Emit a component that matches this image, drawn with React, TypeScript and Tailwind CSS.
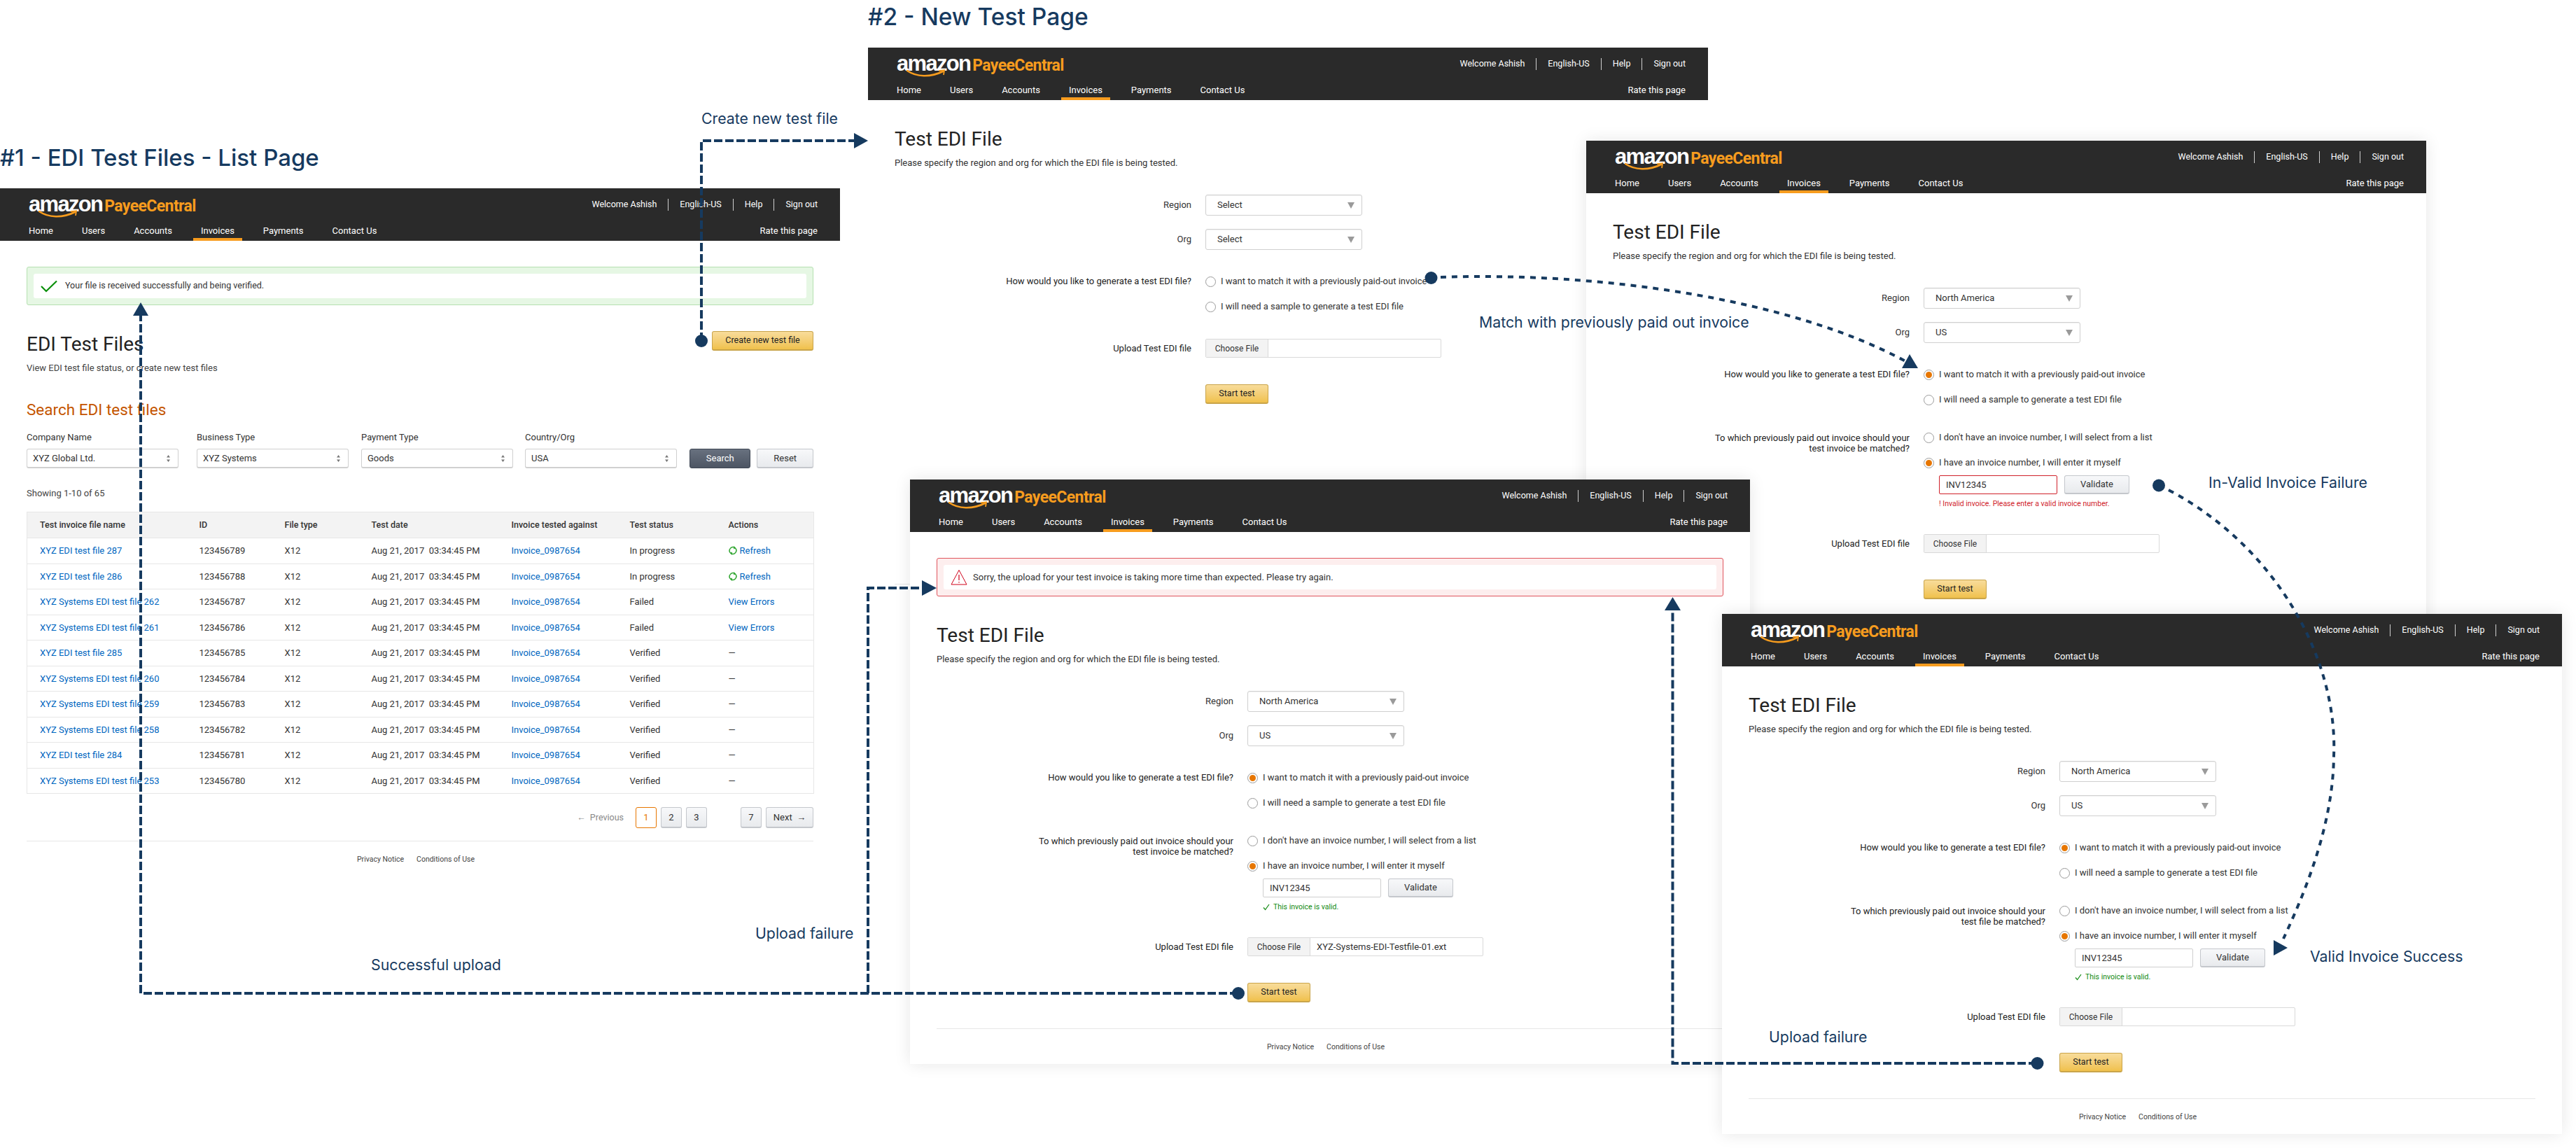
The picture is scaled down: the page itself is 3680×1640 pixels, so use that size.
import React from 'react';

const FONT = "font-['Roboto',sans-serif]";

function Logo() {
  return (
    <div className="relative flex items-baseline h-[34px]">
      <span className="font-['Liberation_Sans',sans-serif] font-bold text-[31px] leading-[34px] tracking-[-1.7px] text-white">amazon</span>
      <span className="ml-[3px] font-['Roboto',sans-serif] font-bold text-[23px] leading-[34px] tracking-[-0.6px] text-[#f79c1e]">PayeeCentral</span>
      <svg className="absolute left-[14px] top-[25px]" width="56" height="14" viewBox="0 0 56 14" fill="none">
        <path d="M1 2 C 14 11, 34 12, 52 3" stroke="#f79c1e" strokeWidth="2.6" strokeLinecap="round" />
        <path d="M46 2.2 L 54 1.2 L 53 8" stroke="#f79c1e" strokeWidth="1.8" fill="none" />
      </svg>
    </div>
  );
}

function Header() {
  return (
    <header className="h-[75px] bg-[#2a2a2a] pl-[41px] pr-[32px] flex flex-col text-white text-[13px]">
      <div className="h-[46px] flex items-center justify-between">
        <Logo />
        <div className="flex items-center text-[12.5px]">
          <span>Welcome Ashish</span>
          <span className="h-[17px] w-px bg-[#cfcfcf] mx-[16px]" />
          <span>English-US</span>
          <span className="h-[17px] w-px bg-[#cfcfcf] mx-[16px]" />
          <span>Help</span>
          <span className="h-[17px] w-px bg-[#cfcfcf] mx-[16px]" />
          <span>Sign out</span>
        </div>
      </div>
      <div className="h-[29px] flex justify-between">
        <nav className="flex gap-[19px] -ml-[11px]">
          {['Home', 'Users', 'Accounts', 'Invoices', 'Payments', 'Contact Us'].map((n) => (
            <a key={n} className={n === 'Invoices' ? 'h-full px-[11px] pt-[5px] border-b-4 border-[#f79c1e]' : 'h-full px-[11px] pt-[5px]'}>{n}</a>
          ))}
        </nav>
        <span className="pt-[5px]">Rate this page</span>
      </div>
    </header>
  );
}

function GoldButton({ children, className }: { children: React.ReactNode; className: string }) {
  return (
    <button className={`${className} rounded-[3px] border border-[#c9a44a] border-b-2 bg-gradient-to-b from-[#f8dc9a] to-[#f0c14b] text-[#222] text-[12.5px]`}>
      {children}
    </button>
  );
}

function GreyButton({ children, className }: { children: React.ReactNode; className: string }) {
  return (
    <button className={`${className} rounded-[3px] border border-[#c4c7cc] border-b-2 bg-gradient-to-b from-[#f7f8fa] to-[#e8eaed] text-[#333] text-[13px]`}>
      {children}
    </button>
  );
}

function Footer({ className }: { className: string }) {
  return (
    <footer className={className}>
      <div className="border-t border-[#e7e7e7] pt-[17px] pr-[12px] flex justify-center gap-[18px] text-[10.5px] leading-[18px] text-[#444]">
        <a>Privacy Notice</a>
        <a>Conditions of Use</a>
      </div>
    </footer>
  );
}

function Alert({ kind, children }: { kind: 'ok' | 'error'; children: React.ReactNode }) {
  const outer = kind === 'ok' ? 'border-[#b5e0b0] bg-[#e6f7e4]' : 'border-[#e0555c] bg-[#fdeeee]';
  const inner = kind === 'ok' ? 'text-[12.5px]' : 'text-[13px]';
  return (
    <div className={`mt-[37px] h-[55px] rounded-[3px] border p-[9px] ${outer}`}>
      <div className={`h-full rounded-[3px] bg-white flex items-center pl-[10px] text-[#333] ${inner}`}>{children}</div>
    </div>
  );
}

function Radio({ on }: { on?: boolean }) {
  return (
    <span className="w-[15px] h-[15px] rounded-full border border-[#9a9a9a] bg-white flex items-center justify-center shrink-0">
      {on && <span className="w-[9px] h-[9px] rounded-full bg-[#e77600]" />}
    </span>
  );
}

function RadioRow({ on, children, className }: { on?: boolean; children: React.ReactNode; className: string }) {
  return (
    <div className={`${className} h-[20px] flex items-center gap-[7px] text-[13px] text-[#333]`}>
      <Radio on={on} />
      <span>{children}</span>
    </div>
  );
}

function DropSelect({ value, className }: { value: string; className: string }) {
  return (
    <div className={`${className} w-[224px] h-[30px] rounded-[3px] border border-[#d0d0d0] shadow-[inset_0_1px_1px_rgba(0,0,0,0.06)] bg-white flex items-center justify-between pl-[16px] pr-[10px] text-[13px] text-[#333]`}>
      <span>{value}</span>
      <svg width="10" height="9" viewBox="0 0 10 9"><path d="M0 0 H10 L5 9 Z" fill="#9a9a9a" /></svg>
    </div>
  );
}

type TestWindowProps = {
  className: string;
  region: string;
  org: string;
  picked?: boolean;
  invoice?: 'invalid' | 'valid';
  matchedLine?: string;
  fileName?: string;
  alert?: boolean;
  children?: React.ReactNode;
};

function TestWindow({ className, region, org, picked, invoice, matchedLine, fileName, alert, children }: TestWindowProps) {
  return (
    <section className={`${className} absolute w-[1200px] bg-white`}>
      <Header />
      <div className="px-[38px]">
        {alert && (
          <Alert kind="error">
            <svg width="24" height="23" viewBox="0 0 24 23" fill="none" className="mr-[8px]">
              <path d="M12 1.5 L23 22 H1 Z" stroke="#d0021b" strokeWidth="1" />
              <path d="M12 8 V16 M12 18 V19.5" stroke="#d0021b" strokeWidth="1.2" />
            </svg>
            Sorry, the upload for your test invoice is taking more time than expected. Please try again.
          </Alert>
        )}
        <h1 className="mt-[38px] text-[28px] leading-[36px] text-[#222]">Test EDI File</h1>
        <p className="mt-[7px] text-[13px] leading-[18px] text-[#333]">Please specify the region and org for which the EDI file is being tested.</p>
        <div className="mt-[36px] grid grid-cols-[424px_1fr] gap-x-[20px] text-[13px] text-[#333]">
          <div className="h-[30px] flex items-center justify-end">Region</div>
          <DropSelect value={region} className="" />
          <div className="mt-[19px] h-[30px] flex items-center justify-end">Org</div>
          <DropSelect value={org} className="mt-[19px]" />

          <div className="mt-[35px] h-[20px] flex items-center justify-end text-[#222]">How would you like to generate a test EDI file?</div>
          <RadioRow on={picked} className="mt-[35px]">I want to match it with a previously paid-out invoice</RadioRow>
          <div />
          <RadioRow className="mt-[16px]">I will need a sample to generate a test EDI file</RadioRow>

          {invoice && (
            <>
              <div className="mt-[34px] h-[20px] text-right leading-[15px] pt-[3px] text-[#222]">
                To which previously paid out invoice should your<br />{matchedLine}
              </div>
              <RadioRow className="mt-[34px]">I don't have an invoice number, I will select from a list</RadioRow>
              <div />
              <RadioRow on className="mt-[16px]">I have an invoice number, I will enter it myself</RadioRow>
              <div />
              <div className="mt-[8px] ml-[22px] flex gap-[10px]">
                <div className={invoice === 'invalid' ? 'w-[169px] h-[27px] rounded-[2px] border border-[#d0212a] pl-[9px] flex items-center' : 'w-[169px] h-[27px] rounded-[2px] border border-[#cfcfcf] pl-[9px] flex items-center'}>INV12345</div>
                <GreyButton className="w-[93px] h-[27px]">Validate</GreyButton>
              </div>
              <div />
              {invoice === 'invalid' ? (
                <div className="mt-[7px] ml-[22px] h-[14px] text-[10.5px] leading-[14px] text-[#d0212a]">! Invalid invoice. Please enter a valid invoice number.</div>
              ) : (
                <div className="mt-[7px] ml-[22px] h-[14px] flex items-center gap-[5px] text-[10.5px] leading-[14px] text-[#118a11]">
                  <svg width="10" height="10" viewBox="0 0 10 10" fill="none"><path d="M1 5.5 L3.6 8.6 L9 1" stroke="#118a11" strokeWidth="1.2" /></svg>
                  This invoice is valid.
                </div>
              )}
            </>
          )}

          <div className="mt-[36px] h-[27px] flex items-center justify-end text-[#222]">Upload Test EDI file</div>
          <div className="mt-[36px] w-[337px] h-[27px] rounded-[2px] border border-[#d9d9d9] flex items-stretch">
            <div className="w-[89px] bg-[#f3f3f3] border-r border-[#d9d9d9] flex items-center justify-center text-[12px]">Choose File</div>
            <div className="pl-[9px] flex items-center">{fileName}</div>
          </div>
          <div />
          <GoldButton className="mt-[38px] w-[90px] h-[28px]">Start test</GoldButton>
        </div>
        {children}
      </div>
    </section>
  );
}

function FilterField({ label, value, className }: { label: string; value: string; className: string }) {
  return (
    <div className={className}>
      <div className="text-[13px] leading-[18px] text-[#333]">{label}</div>
      <div className="mt-[7px] w-[217px] h-[28px] rounded-[3px] border border-[#d0d0d0] border-b-2 flex items-center justify-between pl-[8px] pr-[11px] text-[13px] text-[#333]">
        <span>{value}</span>
        <svg width="5" height="10" viewBox="0 0 5 10"><path d="M2.5 0 L5 3.5 H0 Z M2.5 10 L0 6.5 H5 Z" fill="#777" /></svg>
      </div>
    </div>
  );
}

const ROWS = [
  ['XYZ EDI test file 287', '123456789', 'In progress', 'refresh'],
  ['XYZ EDI test file 286', '123456788', 'In progress', 'refresh'],
  ['XYZ Systems EDI test file 262', '123456787', 'Failed', 'errors'],
  ['XYZ Systems EDI test file 261', '123456786', 'Failed', 'errors'],
  ['XYZ EDI test file 285', '123456785', 'Verified', 'none'],
  ['XYZ Systems EDI test file 260', '123456784', 'Verified', 'none'],
  ['XYZ Systems EDI test file 259', '123456783', 'Verified', 'none'],
  ['XYZ Systems EDI test file 258', '123456782', 'Verified', 'none'],
  ['XYZ EDI test file 284', '123456781', 'Verified', 'none'],
  ['XYZ Systems EDI test file 253', '123456780', 'Verified', 'none'],
];

function RefreshIcon() {
  return (
    <svg width="12" height="15" viewBox="0 0 12 15" fill="none" className="mr-[4px]">
      <path d="M9.4 4 A4.6 4.6 0 0 0 2.2 4.6 A4.8 4.8 0 0 0 2.6 11" stroke="#2fa52f" strokeWidth="1.5" />
      <path d="M2.6 11 A4.6 4.6 0 0 0 9.8 10.4 A4.8 4.8 0 0 0 9.4 4" stroke="#2fa52f" strokeWidth="1.5" />
      <path d="M7.4 1 L10.2 4 L7 5.4 Z M4.6 14 L1.8 11 L5 9.6 Z" fill="#2fa52f" />
    </svg>
  );
}

function PageButton({ children, className }: { children: React.ReactNode; className: string }) {
  return <GreyButton className={`${className} h-[30px]`}>{children}</GreyButton>;
}

function ListWindow() {
  return (
    <section className="absolute left-0 top-[269px] w-[1200px] bg-white">
      <Header />
      <div className="px-[38px]">
        <Alert kind="ok">
          <svg width="24" height="18" viewBox="0 0 24 18" fill="none" className="mr-[11px]">
            <path d="M1 9 L8 16 L23 1.5" stroke="#0a8f0a" strokeWidth="2.2" />
          </svg>
          Your file is received successfully and being verified.
        </Alert>
        <div className="mt-[37px] flex items-start justify-between">
          <h1 className="mt-px text-[28px] leading-[36px] text-[#222]">EDI Test Files</h1>
          <GoldButton className="w-[145px] h-[28px]">Create new test file</GoldButton>
        </div>
        <p className="mt-[7px] text-[13px] leading-[18px] text-[#444]">View EDI test file status, or create new test files</p>
        <h2 className="mt-[36px] text-[22.5px] leading-[28px] text-[#c45500]">Search EDI test files</h2>
        <div className="mt-[17px] flex items-end">
          <FilterField label="Company Name" value="XYZ Global Ltd." className="mr-[26px]" />
          <FilterField label="Business Type" value="XYZ Systems" className="mr-[18px]" />
          <FilterField label="Payment Type" value="Goods" className="mr-[17px]" />
          <FilterField label="Country/Org" value="USA" className="mr-[18px]" />
          <button className="w-[88px] h-[28px] rounded-[3px] border border-[#3f4754] bg-gradient-to-b from-[#68717f] to-[#4d5563] text-white text-[13px]">Search</button>
          <GreyButton className="ml-[9px] w-[81px] h-[28px]">Reset</GreyButton>
        </div>
        <p className="mt-[27px] text-[13px] leading-[18px] text-[#444]">Showing 1-10 of 65</p>
        <table className="mt-[17px] w-[1124px] table-fixed border-collapse border border-[#e7e7e7] text-[13px] text-[#333]">
          <colgroup>
            <col className="w-[246px]" />
            <col className="w-[122px]" />
            <col className="w-[124px]" />
            <col className="w-[200px]" />
            <col className="w-[169px]" />
            <col className="w-[141px]" />
            <col className="w-[122px]" />
          </colgroup>
          <thead>
            <tr className="h-[37px] bg-[#f3f3f3] text-left border-b border-[#e7e7e7] text-[12.5px]">
              <th className="pl-[18px] font-medium">Test invoice file name</th>
              <th className="font-medium">ID</th>
              <th className="font-medium">File type</th>
              <th className="font-medium">Test date</th>
              <th className="font-medium">Invoice tested against</th>
              <th className="font-medium">Test status</th>
              <th className="font-medium">Actions</th>
            </tr>
          </thead>
          <tbody>
            {ROWS.map(([name, id, status, action]) => (
              <tr key={id} className="h-[36.5px] border-b border-[#e7e7e7]">
                <td className="pl-[18px] text-[#0066c0]">{name}</td>
                <td>{id}</td>
                <td>X12</td>
                <td>Aug 21, 2017&nbsp;&nbsp;03:34:45 PM</td>
                <td className="text-[#0066c0]">Invoice_0987654</td>
                <td>{status}</td>
                <td>
                  {action === 'refresh' && <span className="flex items-center text-[#0066c0]"><RefreshIcon />Refresh</span>}
                  {action === 'errors' && <span className="text-[#0066c0]">View Errors</span>}
                  {action === 'none' && <span>—</span>}
                </td>
              </tr>
            ))}
          </tbody>
        </table>
        <div className="mt-[19px] flex justify-end items-center gap-[6px]">
          <span className="mr-[11px] text-[12.5px] text-[#888]">←&nbsp;&nbsp;Previous</span>
          <button className="w-[30px] h-[30px] rounded-[3px] border border-[#e77600] text-[#e77600] text-[13px] bg-white">1</button>
          <PageButton className="w-[30px]">2</PageButton>
          <PageButton className="w-[30px] mr-[42px]">3</PageButton>
          <PageButton className="w-[30px]">7</PageButton>
          <PageButton className="w-[68px]">Next&nbsp;&nbsp;→</PageButton>
        </div>
        <Footer className="mt-[18px]" />
      </div>
    </section>
  );
}

const NAVY = '#163a5f';

function Flows() {
  return (
    <svg className="absolute left-0 top-0 pointer-events-none" width="3680" height="1640" viewBox="0 0 3680 1640" fill="none">
      <g stroke={NAVY} strokeWidth="4" strokeDasharray="12 4">
        <path d="M1002 487 V201 H1222" />
        <path d="M1769 1419 H201 V450" />
        <path d="M1240 1419 V840 H1318" />
        <path d="M2910 1519 H2389.5 V870" />
      </g>
      <g stroke={NAVY} strokeWidth="4" strokeDasharray="8 8">
        <path d="M2058 396 C 2290 388, 2560 428, 2722 516" />
        <path d="M3098 700 C 3250 780, 3340 940, 3334 1080 C 3333 1170, 3300 1260, 3262 1341" />
      </g>
      <g fill={NAVY}>
        <circle cx="1002" cy="487" r="9" />
        <circle cx="1769" cy="1419" r="9" />
        <circle cx="2910.5" cy="1519" r="9" />
        <circle cx="2044.5" cy="397" r="9" />
        <circle cx="3084" cy="693.5" r="9" />
        <path d="M1240 201 L1220 190 V212 Z" />
        <path d="M201 432 L190 451 H212 Z" />
        <path d="M1338 840 L1317 829 V851 Z" />
        <path d="M2389.5 853 L2378 872 H2401 Z" />
        <path d="M2728 506 L2717 526 H2740 Z" />
        <path d="M3268 1354 L3248 1343 V1365 Z" />
      </g>
    </svg>
  );
}

function Note({ className, children }: { className: string; children: React.ReactNode }) {
  return <span className={`${className} absolute font-['Inter',sans-serif] text-[21.3px] leading-[26px] text-[#163a5f] whitespace-nowrap`}>{children}</span>;
}

export default function App() {
  return (
    <div className={`${FONT} relative w-[3680px] h-[1640px] bg-white overflow-hidden`}>
      <h1 className="absolute left-0 top-[203px] font-['Inter',sans-serif] font-medium text-[33px] leading-[44px] text-[#163a5f] whitespace-nowrap">#1 - EDI Test Files - List Page</h1>
      <h1 className="absolute left-[1240px] top-[2px] font-['Inter',sans-serif] font-medium text-[33.5px] leading-[44px] text-[#163a5f] whitespace-nowrap">#2 - New Test Page</h1>

      <ListWindow />
      <TestWindow className="left-[1240px] top-[68px] h-[700px]" region="Select" org="Select">
        <hr className="mt-[257px] border-[#e7e7e7]" />
      </TestWindow>
      <TestWindow className="left-[2266px] top-[201px] h-[800px] shadow-[0_0_22px_rgba(0,0,0,0.1)]" region="North America" org="US" picked invoice="invalid" matchedLine="test invoice be matched?" />
      <TestWindow className="left-[1300px] top-[685px] shadow-[0_0_22px_rgba(0,0,0,0.1)]" region="North America" org="US" picked invoice="valid" matchedLine="test invoice be matched?" fileName="XYZ-Systems-EDI-Testfile-01.ext" alert>
        <Footer className="mt-[37px] pb-[15px]" />
      </TestWindow>
      <TestWindow className="left-[2460px] top-[877px] shadow-[0_0_22px_rgba(0,0,0,0.1)]" region="North America" org="US" picked invoice="valid" matchedLine="test file be matched?">
        <Footer className="mt-[37px] pb-[15px]" />
      </TestWindow>

      <Flows />
      <Note className="left-[1002px] top-[156px]">Create new test file</Note>
      <Note className="left-[2113px] top-[447px]">Match with previously paid out invoice</Note>
      <Note className="left-[3155px] top-[676px]">In-Valid Invoice Failure</Note>
      <Note className="left-[3300px] top-[1353px]">Valid Invoice Success</Note>
      <Note className="left-[2527px] top-[1468px]">Upload failure</Note>
      <Note className="left-[1079px] top-[1320px]">Upload failure</Note>
      <Note className="left-[530px] top-[1365px]">Successful upload</Note>
    </div>
  );
}
